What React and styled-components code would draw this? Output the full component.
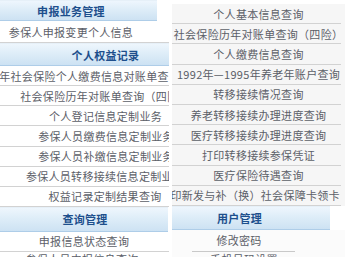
import React from 'react';
import styled, { createGlobalStyle } from 'styled-components';

const Global = createGlobalStyle`
  html, body { margin: 0; padding: 0; background: #ffffff; }
  body { font-family: "Noto Sans CJK SC", "Noto Sans", sans-serif; }
`;

const shift = (c, w) => {
  const d = 2 * c - w;
  return d >= 0 ? `padding-left: ${d}px;` : `padding-right: ${-d}px;`;
};

const Page = styled.div`
  display: flex;
  align-items: flex-start;
  gap: 3px;
  width: 358px;
  height: 257px;
  overflow: hidden;
`;

const Column = styled.div`
  display: flex;
  flex-direction: column;
  flex-shrink: 0;
  width: ${(p) => p.$w}px;
  margin-top: ${(p) => p.$top || 0}px;
`;

const List = styled.div`
  display: flex;
  flex-direction: column;
  background: ${(p) => p.$bg || '#ffffff'};
  padding-right: ${(p) => p.$pr || 0}px;
`;

const Header = styled.div`
  box-sizing: border-box;
  width: ${(p) => p.$w}px;
  height: ${(p) => p.$h}px;
  display: flex;
  align-items: center;
  justify-content: center;
  white-space: nowrap;
  overflow: hidden;
  background: linear-gradient(#eef6fd 0%, #deedf8 45%, #cde2f3 100%);
  border-top: 1px solid #e6f0f8;
  border-bottom: 1px solid #aecde8;
  color: #1d4f8c;
  font-weight: 700;
  font-size: 11px;
  letter-spacing: 0.3px;
  ${(p) => shift(p.$c, p.$w)}
`;

const Item = styled.div`
  box-sizing: border-box;
  width: ${(p) => p.$w}px;
  height: ${(p) => p.$h}px;
  flex-shrink: 0;
  display: flex;
  align-items: center;
  justify-content: center;
  white-space: nowrap;
  overflow: hidden;
  font-size: 11px;
  letter-spacing: 0.3px;
  color: #5c6068;
  border-bottom: ${(p) => (p.$noline ? 'none' : '1px solid #d2d2d2')};
  ${(p) => shift(p.$c, p.$w)}
`;

const Divider = styled.div`
  height: 1px;
  width: ${(p) => p.$w}px;
  margin-left: ${(p) => p.$ml}px;
  background: #c9c9c9;
`;

const LW = 169;
const RH = 20.15;

const leftRecords = [
  { t: '年社会保险个人缴费信息对账单查', c: 84 },
  { t: '社会保险历年对账单查询（四险）', c: 105 },
  { t: '个人登记信息定制业务', c: 105.5 },
  { t: '参保人员缴费信息定制业务', c: 106 },
  { t: '参保人员补缴信息定制业务', c: 106 },
  { t: '参保人员转移接续信息定制业务', c: 105 },
  { t: '权益记录定制结果查询', c: 105 },
];

const rightItems = [
  { t: '个人基本信息查询', c: 86.5 },
  { t: '社会保险历年对账单查询（四险）', c: 86.5 },
  { t: '个人缴费信息查询', c: 86.5 },
  { t: '1992年—1995年养老年账户查询', c: 86.5 },
  { t: '转移接续情况查询', c: 86.5 },
  { t: '养老转移接续办理进度查询', c: 86.5 },
  { t: '医疗转移接续办理进度查询', c: 86.5 },
  { t: '打印转移接续参保凭证', c: 86.5 },
  { t: '医疗保险待遇查询', c: 86.5 },
  { t: '打印新发与补（换）社会保障卡领卡', c: 77.5 },
];

export default function App() {
  return (
    <>
      <Global />
      <Page>
        <Column $w={LW}>
          <Header $w={157} $h={21} $c={71}>申报业务管理</Header>
          <Item $w={LW} $h={22} $c={71}>参保人申报变更个人信息</Item>
          <Header $w={LW} $h={23} $c={105.5}>个人权益记录</Header>
          {leftRecords.map((r) => (
            <Item key={r.t} $w={LW} $h={RH} $c={r.c}>{r.t}</Item>
          ))}
          <Header $w={168} $h={25} $c={85}>查询管理</Header>
          <Item $w={LW} $h={20} $c={84}>申报信息状态查询</Item>
          <Item $w={LW} $h={15} $c={82} $noline>参保人员申报信息查询</Item>
        </Column>
        <Column $w={173} $top={4}>
          <List $bg="#f6f6f6" $pr={4}>
            {rightItems.map((r) => (
              <Item key={r.t} $w={169} $h={20.2} $c={r.c}>{r.t}</Item>
            ))}
          </List>
          <Header $w={158} $h={24} $c={67.5}>用户管理</Header>
          <List $bg="#fbfbfb">
            <Item $w={173} $h={21} $c={67} $noline>修改密码</Item>
            <Divider $w={103} $ml={20} />
            <Item $w={173} $h={15} $c={72} $noline>手机号码设置</Item>
          </List>
        </Column>
      </Page>
    </>
  );
}
